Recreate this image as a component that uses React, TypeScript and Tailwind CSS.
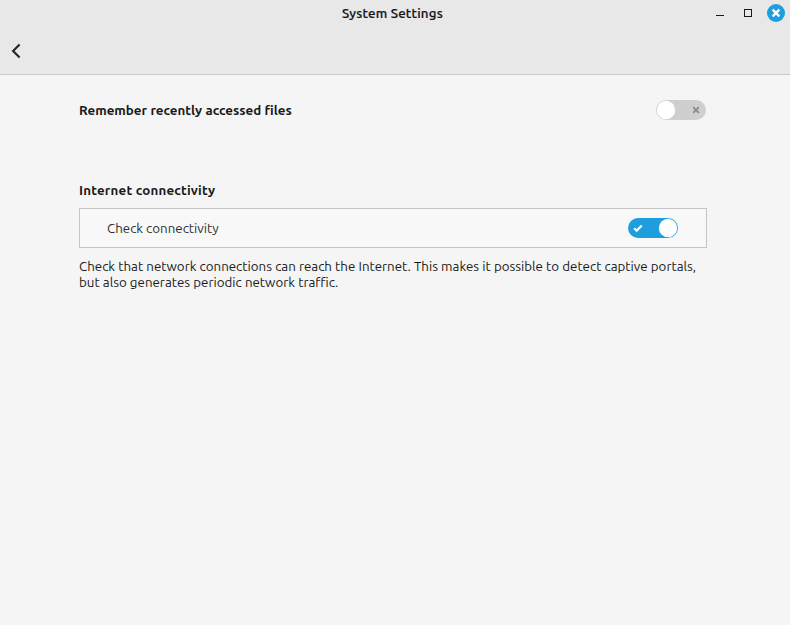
import React from "react";

function TitleBar() {
  return (
    <header className="h-[75px] shrink-0 border-b border-[#c9c9c9] bg-[#e8e8e8]">
      <div className="grid h-[26px] grid-cols-[1fr_auto_1fr] items-center">
        <span />
        <h1 className="pt-[2px] pr-[5px] text-[13.333px] leading-4 font-medium tracking-[0.2px] whitespace-nowrap text-[#141414] [-webkit-text-stroke:0.2px_#141414]">
          System Settings
        </h1>
        <div className="flex items-center justify-end pr-[5px]">
          <button aria-label="Minimize" className="mr-5 flex h-4 w-2 items-center">
            <svg width="8" height="16" shapeRendering="crispEdges">
              <path d="M0 10h8v1H0z" fill="#1a1a1a" />
            </svg>
          </button>
          <button aria-label="Maximize" className="mr-[15px] h-2 w-2 border border-[#1a1a1a]" />
          <button aria-label="Close" className="h-[18px] w-[18px]">
            <svg width="18" height="18" viewBox="0 0 18 18">
              <circle cx="9" cy="9" r="9" fill="#1f9ede" />
              <path d="M5.7 5.7l6.6 6.6M12.3 5.7l-6.6 6.6" stroke="#fff" strokeWidth="2.4" />
            </svg>
          </button>
        </div>
      </div>
      <button aria-label="Back" className="mt-[17px] ml-[11px] block h-4 w-3">
        <svg width="12" height="16" viewBox="0 0 12 16">
          <path d="M8.6 1.4L2.1 8l6.5 6.6" fill="none" stroke="#262626" strokeWidth="2.1" />
        </svg>
      </button>
    </header>
  );
}

function Toggle({ on }: { on: boolean }) {
  return (
    <button role="switch" aria-checked={on} className="h-5 w-[50px]">
      <svg width="50" height="20" viewBox="0 0 50 20">
        <rect width="50" height="20" rx="10" fill={on ? "#1f9ede" : "#cfcfcf"} />
        <circle cx={on ? 40 : 10} cy="10" r="9.2" fill="#fff" />
        {on ? (
          <path d="M6.2 10.2l2.5 2.5 5-5.1" fill="none" stroke="#fff" strokeWidth="2.2" />
        ) : (
          <path d="M37.2 7.2l5.6 5.6M42.8 7.2l-5.6 5.6" stroke="#8b8b8b" strokeWidth="1.9" />
        )}
      </svg>
    </button>
  );
}

export default function App() {
  return (
    <div className="flex h-[625px] w-[790px] flex-col bg-[#f5f5f5] font-['Ubuntu','Noto_Sans',sans-serif] text-[13.333px] leading-4 text-[#303030]">
      <TitleBar />
      <main className="flex flex-col pt-[25px] pr-[83px] pl-[79px]">
        <div className="flex h-5 items-center justify-between pr-px">
          <span className="pt-[2px] font-bold [word-spacing:0.3px] text-[#1a1a1a]">Remember recently accessed files</span>
          <Toggle on={false} />
        </div>
        <h2 className="mt-[63px] h-4 font-bold tracking-[0.2px] text-[#1a1a1a]">
          <span>Internet connectivity</span>
        </h2>
        <div className="mt-[9px] flex h-10 items-center justify-between border border-[#c6c6c6] bg-[#f8f8f8] pr-7 pl-[27px]">
          <span className="pt-[2px]">Check connectivity</span>
          <Toggle on />
        </div>
        <p className="mt-[11px] [word-spacing:0.1px] whitespace-nowrap text-[#1a1a1a]">
          <span>Check that network connections can reach the Internet. This makes it possible to detect captive portals,</span>
          <br />
          <span>but also generates periodic network traffic.</span>
        </p>
      </main>
    </div>
  );
}
